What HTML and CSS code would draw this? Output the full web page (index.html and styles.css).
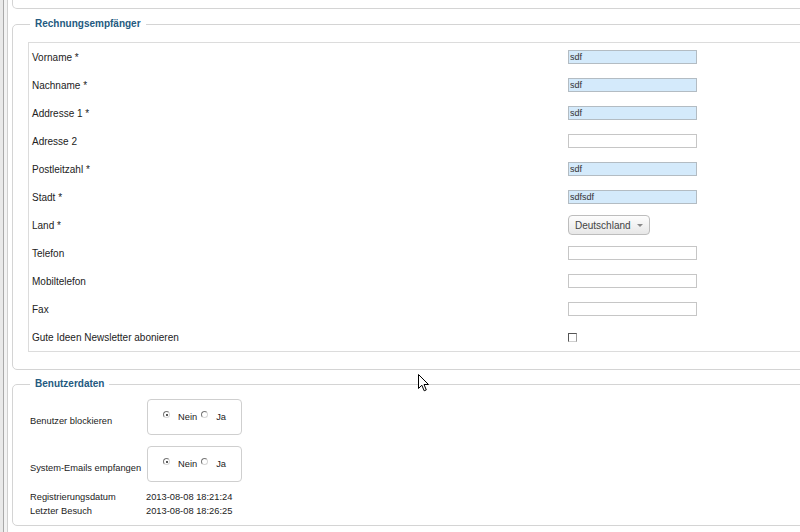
FILE: index.html
```html
<!DOCTYPE html>
<html lang="de">
<head>
<meta charset="utf-8">
<title>Benutzer</title>
<link rel="stylesheet" href="styles.css">
</head>
<body>
<div class="page">
  <div class="edge"></div>
  <div class="content">
    <div class="prev-box"></div>

    <fieldset class="group billing">
      <legend>Rechnungsempfänger</legend>
      <div class="form-table">
        <div class="row"><span class="label">Vorname *</span><span class="field"><input class="text filled" type="text" value="sdf"></span></div>
        <div class="row"><span class="label">Nachname *</span><span class="field"><input class="text filled" type="text" value="sdf"></span></div>
        <div class="row"><span class="label">Addresse 1 *</span><span class="field"><input class="text filled" type="text" value="sdf"></span></div>
        <div class="row"><span class="label">Adresse 2</span><span class="field"><input class="text" type="text" value=""></span></div>
        <div class="row"><span class="label">Postleitzahl *</span><span class="field"><input class="text filled" type="text" value="sdf"></span></div>
        <div class="row"><span class="label">Stadt *</span><span class="field"><input class="text filled" type="text" value="sdfsdf"></span></div>
        <div class="row"><span class="label">Land *</span><span class="field"><span class="select"><span class="select-text">Deutschland</span><span class="select-arrow"></span></span></span></div>
        <div class="row"><span class="label">Telefon</span><span class="field"><input class="text" type="text" value=""></span></div>
        <div class="row"><span class="label">Mobiltelefon</span><span class="field"><input class="text" type="text" value=""></span></div>
        <div class="row"><span class="label">Fax</span><span class="field"><input class="text" type="text" value=""></span></div>
        <div class="row"><span class="label">Gute Ideen Newsletter abonieren</span><span class="field"><span class="checkbox"></span></span></div>
      </div>
    </fieldset>

    <fieldset class="group user">
      <legend>Benutzerdaten</legend>
      <div class="opt-row">
        <span class="opt-label">Benutzer blockieren</span>
        <span class="radio-box">
          <span class="radio checked"></span><span class="radio-text">Nein</span>
          <span class="radio"></span><span class="radio-text">Ja</span>
        </span>
      </div>
      <div class="opt-row second">
        <span class="opt-label">System-Emails empfangen</span>
        <span class="radio-box">
          <span class="radio checked"></span><span class="radio-text">Nein</span>
          <span class="radio"></span><span class="radio-text">Ja</span>
        </span>
      </div>
      <div class="info">
        <span>Registrierungsdatum</span><span>2013-08-08 18:21:24</span>
        <span>Letzter Besuch</span><span>2013-08-08 18:26:25</span>
      </div>
    </fieldset>
  </div>
</div>
<svg class="cursor" width="12" height="18" viewBox="0 0 12 18">
  <path d="M0.5 0.5 L0.5 14.5 L3.8 11.2 L6.2 16.8 L8.3 15.9 L6 10.5 L10.5 10.5 Z" fill="#fff" stroke="#000" stroke-width="1" stroke-linejoin="miter"/>
</svg>
</body>
</html>
```

FILE: styles.css
```css
* { box-sizing: border-box; }

html, body {
  margin: 0;
  padding: 0;
}

body {
  width: 800px;
  height: 532px;
  overflow: hidden;
  position: relative;
  background: #fff;
  font-family: "Liberation Sans", Arial, sans-serif;
  color: #222;
}

.page {
  display: flex;
  height: 532px;
}

.edge {
  flex: none;
  width: 8px;
  background: linear-gradient(to right, #e9e9e9 0 3px, #a9a9a9 3px 4px, #f3f3f3 4px 7px, #cfcfcf 7px 8px);
}

.content {
  flex: none;
  width: 830px;
  padding-left: 4px;
}

.prev-box {
  height: 9px;
  border: 1px solid #d4d4d4;
  border-top: none;
  border-radius: 0 0 5px 5px;
}

.group {
  margin: 9px 0 0;
  min-width: 0;
  border: 1px solid #d4d4d4;
  border-radius: 5px;
}

.group legend {
  padding: 0 5px;
  font-size: 10px;
  font-weight: bold;
  line-height: 12px;
  color: #245a80;
}

.billing {
  padding: 12px 0 17px 15px;
}

.billing legend {
  margin-left: 2px;
}

.form-table {
  border: 1px solid #dcdcdc;
  border-right: none;
}

.row {
  display: grid;
  grid-template-columns: 539px 1fr;
  align-items: center;
  height: 28px;
}

.label {
  padding-left: 3px;
  font-size: 10px;
}

.field {
  display: flex;
  align-items: center;
}

.text {
  width: 129px;
  height: 14px;
  margin: 0;
  padding: 0 1px;
  border: 1px solid #c6c6c6;
  border-radius: 0;
  background: #fff;
  font-family: "Liberation Sans", Arial, sans-serif;
  font-size: 9px;
  color: #333;
  outline: none;
}

.text.filled {
  background: #d4eafb;
  border-color: #b3bcc3;
}

.select {
  display: flex;
  align-items: center;
  width: 82px;
  height: 20px;
  padding-left: 6px;
  border: 1px solid #bdbdbd;
  border-radius: 4px;
  background: linear-gradient(#fdfdfd, #e7e7e7);
  font-size: 10px;
  color: #444;
}

.select-arrow {
  margin-left: auto;
  margin-right: 6px;
  width: 0;
  height: 0;
  border-left: 3px solid transparent;
  border-right: 3px solid transparent;
  border-top: 3px solid #888;
}

.checkbox {
  display: block;
  width: 9px;
  height: 9px;
  border: 1px solid;
  border-color: #555 #9a9a9a #cfcfcf #555;
  background: #fff;
}

.user {
  margin-top: 8px;
  padding: 9px 0 7px 17px;
}

.opt-row {
  display: flex;
  align-items: center;
}

.opt-row.second {
  margin-top: 11px;
}

.opt-label {
  width: 117px;
  margin-top: 8px;
  font-size: 9.3px;
}

.radio-box {
  display: flex;
  align-items: center;
  width: 95px;
  height: 36px;
  padding-left: 15px;
  border: 1px solid #cfcfcf;
  border-radius: 4px;
  font-size: 9.3px;
}

.radio {
  position: relative;
  width: 7px;
  height: 7px;
  margin-bottom: 5px;
  border: 1px solid;
  border-color: #777 #d6d6d6 #d6d6d6 #777;
  border-radius: 50%;
  background: #fff;
}

.radio.checked::after {
  content: "";
  position: absolute;
  left: 1.5px;
  top: 1.5px;
  width: 2px;
  height: 2px;
  border-radius: 50%;
  background: #222;
}

.radio-text {
  margin-left: 8px;
  margin-right: 4px;
}

.info {
  display: grid;
  grid-template-columns: 116px 1fr;
  margin-top: 8px;
  font-size: 9.3px;
  line-height: 14px;
  color: #222;
}

.cursor {
  position: absolute;
  left: 418px;
  top: 374px;
}
```
